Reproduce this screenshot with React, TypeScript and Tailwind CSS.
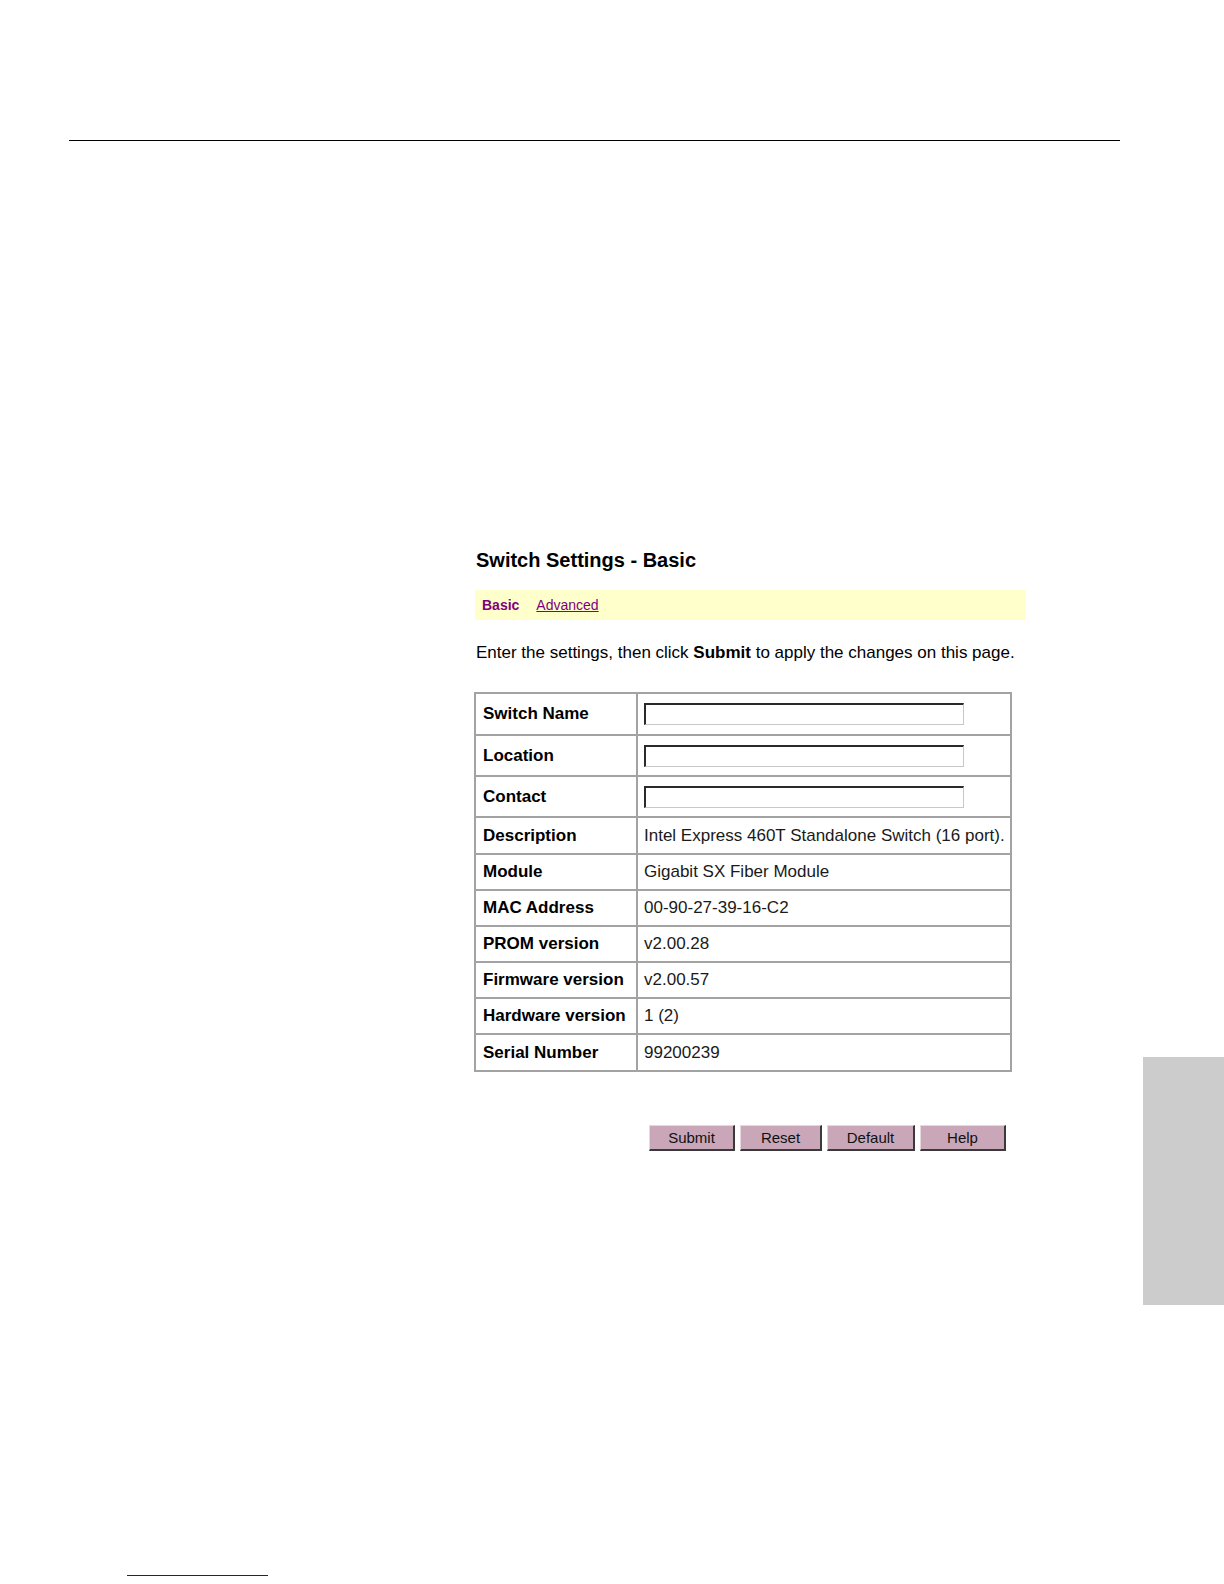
import React from "react";

const font = { fontFamily: '"Liberation Sans", Arial, sans-serif' };

type Row = { label: string; value?: string; input?: boolean; h: string };

const rows: Row[] = [
  { label: "Switch Name", input: true, h: "h-[42px]" },
  { label: "Location", input: true, h: "h-[41px]" },
  { label: "Contact", input: true, h: "h-[41px]" },
  { label: "Description", value: "Intel Express 460T Standalone Switch (16 port).", h: "h-[37px]" },
  { label: "Module", value: "Gigabit SX Fiber Module", h: "h-[36px]" },
  { label: "MAC Address", value: "00-90-27-39-16-C2", h: "h-[36px]" },
  { label: "PROM version", value: "v2.00.28", h: "h-[36px]" },
  { label: "Firmware version", value: "v2.00.57", h: "h-[36px]" },
  { label: "Hardware version", value: "1 (2)", h: "h-[36px]" },
  { label: "Serial Number", value: "99200239", h: "h-[37px]" },
];

function Btn({ label, w }: { label: string; w: string }) {
  return (
    <button
      className={`${w} h-[26px] bg-[#c9a7b9] border-t border-l border-t-[#e6d6de] border-l-[#e6d6de] border-b-2 border-r-2 border-b-[#3a3a3a] border-r-[#3a3a3a] text-[15px] leading-none text-[#111] flex items-center justify-center`}
    >
      {label}
    </button>
  );
}

export default function App() {
  return (
    <div className="w-[1224px] min-h-[1584px] bg-white text-black flex flex-col" style={font}>
      <div className="mt-[140px] ml-[69px] w-[1051px] h-px bg-black" />

      <div className="flex mt-[407px]">
        <div className="ml-[474px] w-[552px] flex flex-col">
          <h1 className="pl-[2px] text-[20px] leading-[24px] font-bold">Switch Settings - Basic</h1>

          <div className="mt-[18px] ml-[1px] w-[551px] h-[30px] bg-[#ffffcc] flex items-center pl-[7px] gap-[17px] text-[14px] text-[#800080]">
            <span className="font-bold">Basic</span>
            <a className="underline cursor-pointer">Advanced</a>
          </div>

          <p className="mt-[23px] pl-[2px] text-[17px] leading-[20px]">
            Enter the settings, then click <b>Submit</b> to apply the changes on this page.
          </p>

          <table className="mt-[29px] w-[538px] table-fixed border-separate border-spacing-0 border border-[#a3a3a3]">
            <colgroup>
              <col className="w-[162px]" />
              <col className="w-[374px]" />
            </colgroup>
            <tbody>
              {rows.map((r) => (
                <tr key={r.label} className={r.h}>
                  <td className="border border-[#a3a3a3] pl-[7px] text-[17px] font-bold leading-[20px] whitespace-nowrap align-middle">
                    {r.label}
                  </td>
                  <td className="border border-[#a3a3a3] pl-[6px] text-[17px] leading-[20px] text-[#1a1a1a] whitespace-nowrap align-middle">
                    {r.input ? (
                      <input
                        type="text"
                        className="block w-[320px] h-[22px] bg-white border-t-2 border-l-2 border-t-[#2a2a2a] border-l-[#2a2a2a] border-b border-r border-b-[#c8c8c8] border-r-[#c8c8c8] outline-none"
                      />
                    ) : (
                      r.value
                    )}
                  </td>
                </tr>
              ))}
            </tbody>
          </table>

          <div className="mt-[53px] ml-[175px] flex gap-[5px]">
            <Btn label="Submit" w="w-[86px]" />
            <Btn label="Reset" w="w-[82px]" />
            <Btn label="Default" w="w-[88px]" />
            <Btn label="Help" w="w-[86px]" />
          </div>
        </div>

        <div className="ml-auto mt-[509px] w-[81px] h-[248px] bg-[#cccccc]" />
      </div>

      <div className="mt-[270px] ml-[127px] w-[141px] h-px bg-[#1a1a80]" />
    </div>
  );
}
